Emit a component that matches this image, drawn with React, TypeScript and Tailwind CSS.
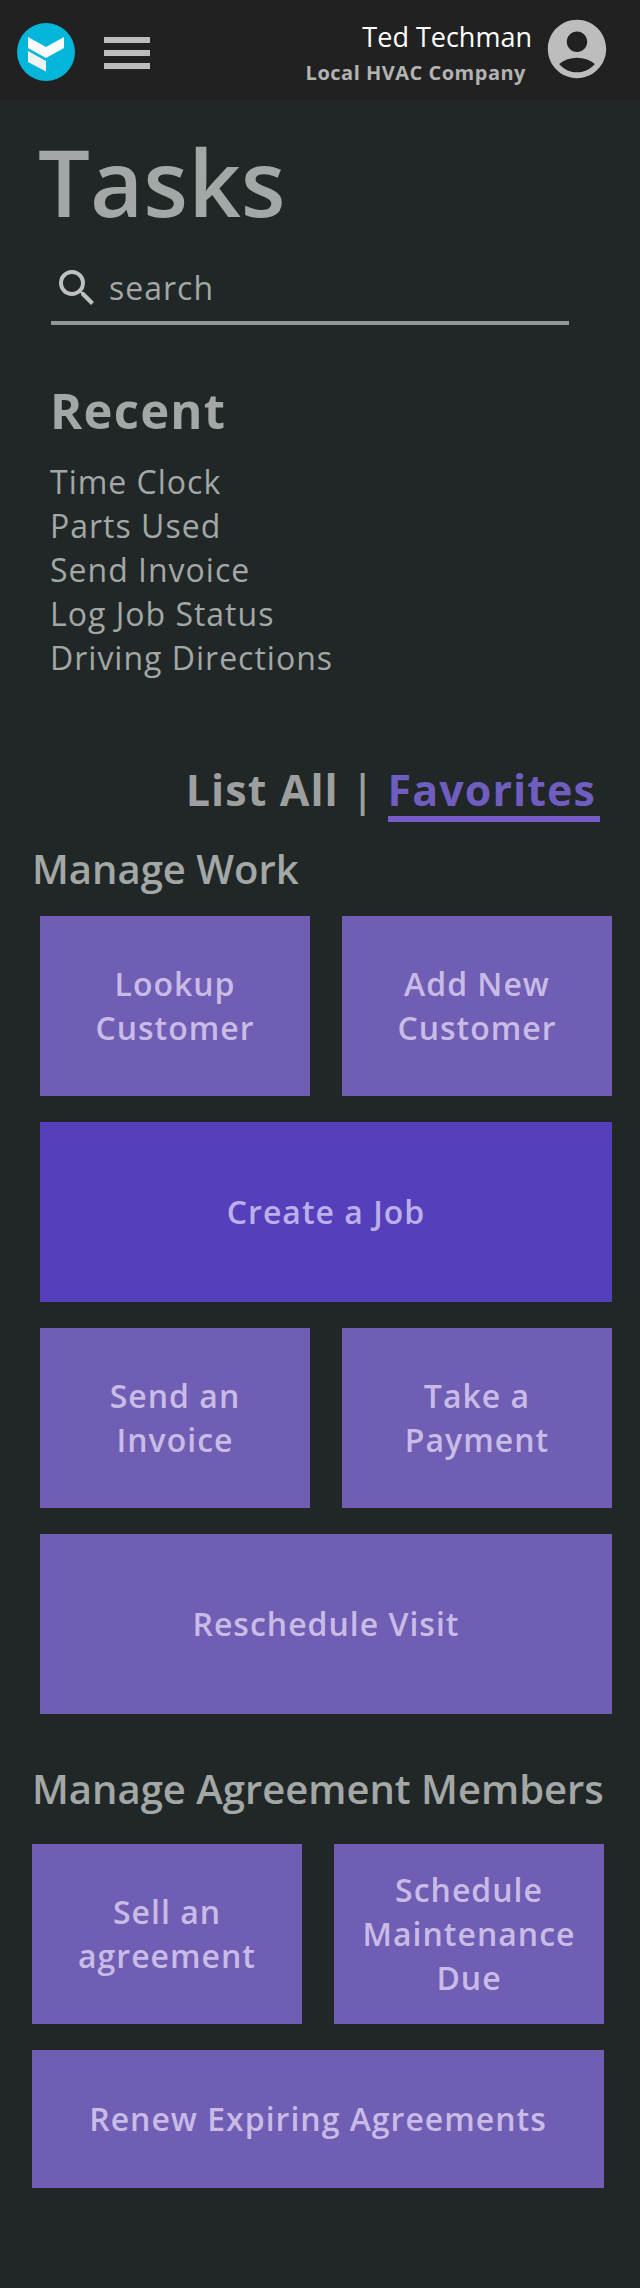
import React from "react";
import { MdAccountCircle, MdSearch } from "react-icons/md";

const recentTasks = [
  "Time Clock",
  "Parts Used",
  "Send Invoice",
  "Log Job Status",
  "Driving Directions",
];

type TileProps = {
  label: string;
  wide?: boolean;
  active?: boolean;
  short?: boolean;
};

function Tile({ label, wide, active, short }: TileProps) {
  const span = wide ? "col-span-2" : "";
  const height = short ? "min-h-[138px]" : "min-h-[180px]";
  const tone = active
    ? "bg-[#563fba] text-[#bbb1ea]"
    : "bg-[#705db4] text-[#c8bce6]";
  return (
    <button
      type="button"
      className={`flex items-center justify-center px-6 text-center text-[32px] leading-[44px] font-semibold tracking-[1px] ${span} ${height} ${tone}`}
    >
      {label}
    </button>
  );
}

function Logo() {
  return (
    <svg viewBox="0 0 58 58" className="size-[58px]" role="img" aria-label="Home">
      <circle cx="29" cy="29" r="29" fill="#03b6da" />
      <path d="M11 14 L29 24 L47 14 V25 L29 35 L11 25 Z" fill="#fafafa" />
      <path d="M11 28 L29 38 V48.5 L11 39 Z" fill="#f2f2f2" />
    </svg>
  );
}

function Header() {
  return (
    <header className="flex min-h-[100px] items-start bg-[#212121] pr-7 pl-[17px]">
      <a href="#home" className="mt-[23px] block">
        <Logo />
      </a>
      <button
        type="button"
        aria-label="Menu"
        className="mt-[37px] ml-[29px] flex w-[46px] flex-col gap-[7px]"
      >
        <span className="h-[6px] w-full bg-[#bdbdbd]" />
        <span className="h-[6px] w-full bg-[#bdbdbd]" />
        <span className="h-[6px] w-full bg-[#bdbdbd]" />
      </button>
      <div className="mt-[18px] ml-auto text-right">
        <p className="text-[27px] leading-[38px] text-white">Ted Techman</p>
        <p className="pr-[6px] text-[20px] leading-[34px] font-bold tracking-wide text-[#b3b3b3]">
          Local HVAC Company
        </p>
      </div>
      <button type="button" aria-label="Account" className="mt-[14px] ml-[10px]">
        <MdAccountCircle className="size-[70px] text-[#bdbdbd]" />
      </button>
    </header>
  );
}

export default function App() {
  return (
    <div className="min-h-screen bg-[#202726] pb-[100px] font-['Open_Sans',sans-serif] text-[#a3a7a6]">
      <Header />
      <main>
        <h1 className="mt-[26px] pl-[38px] text-[92px] leading-[112px] font-semibold">
          Tasks
        </h1>

        <label className="mt-4 mr-[71px] ml-[51px] flex h-[71px] items-center border-b-4 border-[#929696] pl-[2px]">
          <MdSearch className="size-[48px] shrink-0 text-[#bfc1c1]" />
          <input
            type="search"
            aria-label="Search tasks"
            placeholder="search"
            className="ml-2 h-14 min-w-0 flex-1 bg-transparent text-[32px] leading-[44px] tracking-[1px] outline-none placeholder:text-[#a3a7a6]"
          />
        </label>

        <section className="mt-[52px] px-[50px]">
          <h2 className="text-[49px] leading-[66px] font-bold tracking-wide">Recent</h2>
          <ul className="mt-[17px] text-[32px] leading-[44px] tracking-[1px]">
            {recentTasks.map((task) => (
              <li key={task}>
                <a href="#task">{task}</a>
              </li>
            ))}
          </ul>
        </section>

        <nav className="mt-[84px] flex justify-end pr-10 text-[43px] leading-[52px] font-bold tracking-wide text-[#9e9f9f]">
          <a href="#all">List All</a>
          <span className="mx-3 font-semibold">|</span>
          <a
            href="#favorites"
            aria-current="page"
            className="border-b-[6px] border-[#765cc8] pr-1 text-[#705dc0]"
          >
            Favorites
          </a>
        </nav>

        <section className="mt-5">
          <h2 className="px-8 text-[40px] leading-[54px] font-semibold">Manage Work</h2>
          <div className="mt-5 mr-7 ml-10 grid grid-cols-2 gap-x-8 gap-y-[26px]">
            <Tile label="Lookup Customer" />
            <Tile label="Add New Customer" />
            <Tile label="Create a Job" wide active />
            <Tile label="Send an Invoice" />
            <Tile label="Take a Payment" />
            <Tile label="Reschedule Visit" wide />
          </div>
        </section>

        <section className="mt-12">
          <h2 className="pl-8 text-[40px] leading-[54px] font-semibold">
            Manage Agreement Members
          </h2>
          <div className="mt-7 mr-9 ml-8 grid grid-cols-2 gap-x-8 gap-y-[26px]">
            <Tile label="Sell an agreement" />
            <Tile label="Schedule Maintenance Due" />
            <Tile label="Renew Expiring Agreements" wide short />
          </div>
        </section>
      </main>
    </div>
  );
}
